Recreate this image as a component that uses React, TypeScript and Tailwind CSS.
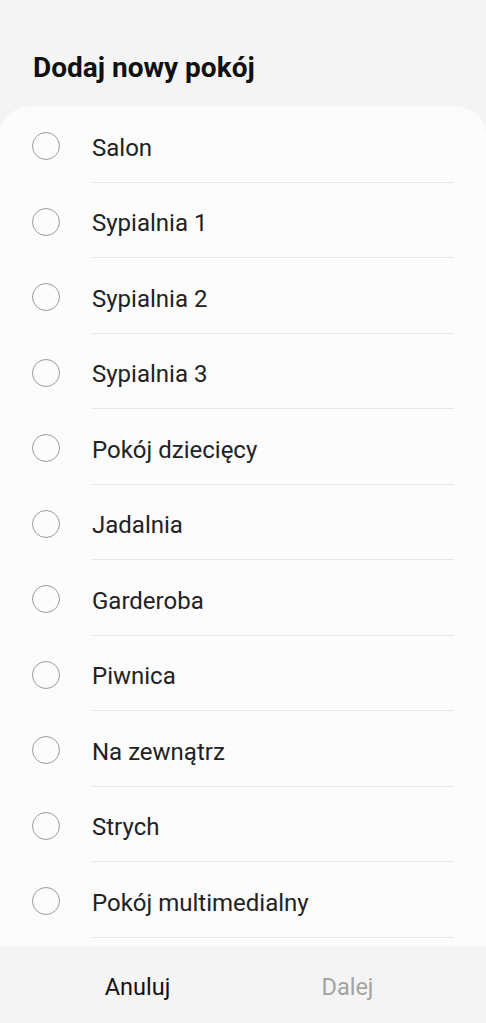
import React from 'react';

const rooms = [
  'Salon',
  'Sypialnia 1',
  'Sypialnia 2',
  'Sypialnia 3',
  'Pokój dziecięcy',
  'Jadalnia',
  'Garderoba',
  'Piwnica',
  'Na zewnątrz',
  'Strych',
  'Pokój multimedialny',
];

function RoomRow({ name }: { name: string }) {
  return (
    <div className="flex h-[75.5px] items-stretch">
      <div className="flex w-[92px] shrink-0 items-center pl-[32px] pt-[3px]">
        <span className="block h-[28px] w-[28px] rounded-full border-[1.5px] border-[#9b9b9b]" />
      </div>
      <div className="mr-[32px] flex flex-1 items-center border-b border-[#e6e6e6] pt-[7px] text-[24px] text-[#222222]">
        {name}
      </div>
    </div>
  );
}

export default function App() {
  return (
    <div
      className="flex h-[1023px] w-full flex-col overflow-hidden bg-[#f4f4f4]"
      style={{ fontFamily: 'Roboto, "Noto Sans", sans-serif' }}
    >
      {/* Header */}
      <div className="flex h-[107px] shrink-0 items-center pl-[33px] pt-[28px]">
        <h1 className="text-[28px] font-bold leading-none text-[#111111]">Dodaj nowy pokój</h1>
      </div>

      {/* Room list */}
      <div className="flex-1 overflow-hidden rounded-t-[28px] bg-[#fcfcfc]">
        {rooms.map((room) => (
          <RoomRow key={room} name={room} />
        ))}
      </div>

      {/* Footer buttons */}
      <div className="grid h-[76px] shrink-0 grid-cols-2 items-center bg-[#f4f4f4] pt-[6px]">
        <span className="pl-[32px] text-center text-[23.5px] leading-none text-[#111111]">Anuluj</span>
        <span className="pr-[34px] text-center text-[23.5px] leading-none text-[#a3a3a3]">Dalej</span>
      </div>
    </div>
  );
}
